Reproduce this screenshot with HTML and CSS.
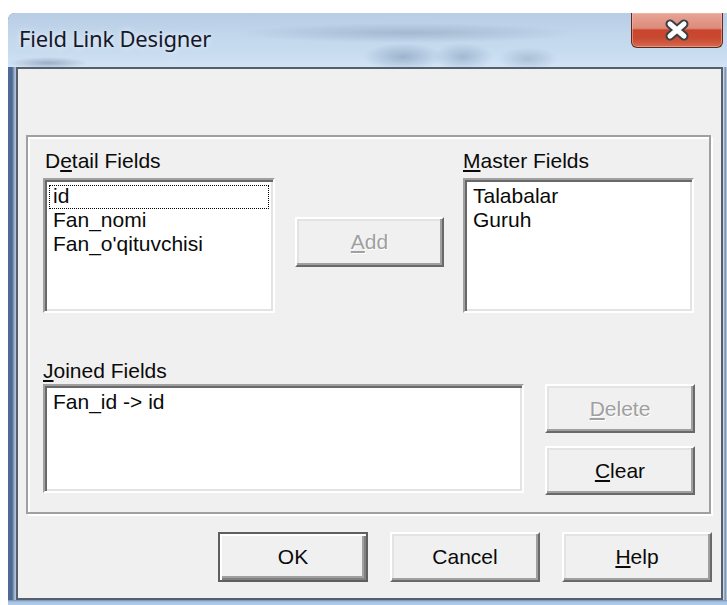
FILE: index.html
```html
<!DOCTYPE html>
<html lang="en">
<head>
<meta charset="utf-8">
<title>Field Link Designer</title>
<link rel="stylesheet" href="styles.css">
</head>
<body>
<div class="window">
  <div class="titlebar">
    <span class="title">Field Link Designer</span>
    <button class="close" aria-label="Close">
      <svg width="28" height="22" viewBox="0 0 28 22">
        <path d="M7 5 L21 17 M21 5 L7 17" stroke="#3b3f46" stroke-width="9" stroke-linecap="round"/>
        <path d="M7 5 L21 17 M21 5 L7 17" stroke="#ffffff" stroke-width="5" stroke-linecap="round"/>
      </svg>
    </button>
  </div>
  <div class="client">
    <div class="group">
      <div class="row-top">
        <div class="field field-detail">
          <span class="label label-indent">D<u>e</u>tail Fields</span>
          <div class="listbox listbox-detail">
            <div class="item focused">id</div>
            <div class="item">Fan_nomi</div>
            <div class="item">Fan_o'qituvchisi</div>
          </div>
        </div>
        <button class="btn btn-add" disabled><u>A</u>dd</button>
        <div class="field field-master">
          <span class="label"><u>M</u>aster Fields</span>
          <div class="listbox listbox-master">
            <div class="item">Talabalar</div>
            <div class="item">Guruh</div>
          </div>
        </div>
      </div>
      <div class="row-bottom">
        <div class="field field-joined">
          <span class="label"><u>J</u>oined Fields</span>
          <div class="listbox listbox-joined">
            <div class="item">Fan_id -&gt; id</div>
          </div>
        </div>
        <div class="side-buttons">
          <button class="btn" disabled><u>D</u>elete</button>
          <button class="btn"><u>C</u>lear</button>
        </div>
      </div>
    </div>
    <div class="footer">
      <button class="btn btn-default">OK</button>
      <button class="btn">Cancel</button>
      <button class="btn"><u>H</u>elp</button>
    </div>
  </div>
</div>
</body>
</html>
```
FILE: styles.css
```css
* { box-sizing: border-box; }

html, body {
  margin: 0;
  padding: 0;
}

body {
  width: 727px;
  height: 605px;
  overflow: hidden;
  background: #ffffff;
  font-family: "Liberation Sans", Arial, sans-serif;
  color: #0a0a0a;
}

/* ---- window frame ---- */
.window {
  margin: 13px 0 0 8px;
  width: 725px;
  height: 595px;
  padding: 0 10px 8px 8px;
  display: flex;
  flex-direction: column;
  border-radius: 7px 7px 0 0;
  background:
    linear-gradient(to bottom, transparent 0, transparent 587px, #6f8fb8 587px, #a9c5e4 589px, #b9d2ec 100%),
    linear-gradient(to right, #506c96 0, #4b6791 4px, #8ea5c2 6px, #b8cbe0 8px, #c3d6ea 716px, #6d7f95 717px, #c6d9ec 719px);
}

.titlebar {
  height: 54px;
  margin: 0 -10px 0 -8px;
  padding: 0 10px 0 8px;
  display: flex;
  justify-content: space-between;
  align-items: flex-start;
  border-radius: 7px 7px 0 0;
  background:
    radial-gradient(ellipse 40px 14px at 395px 44px, rgba(70, 100, 140, 0.35), transparent),
    radial-gradient(ellipse 30px 14px at 455px 44px, rgba(70, 100, 140, 0.3), transparent),
    radial-gradient(ellipse 30px 12px at 520px 46px, rgba(70, 100, 140, 0.25), transparent),
    radial-gradient(ellipse 170px 10px at 400px 20px, rgba(110, 130, 160, 0.35), transparent),
    radial-gradient(ellipse 40px 6px at 40px 50px, rgba(60, 80, 110, 0.35), transparent),
    linear-gradient(to bottom, #b7cde4 0, #c2d7ec 22px, #c8dcf0 40px, #d2e4f5 54px);
}

.title {
  padding: 12px 0 0 3px;
  font-family: "Noto Sans", "Open Sans", sans-serif;
  font-size: 22px;
  line-height: 26px;
  letter-spacing: -0.2px;
  color: #16182a;
  text-shadow: 0 0 6px rgba(255, 255, 255, 0.8);
}

.close {
  width: 92px;
  height: 35px;
  margin: 0;
  padding: 0;
  display: flex;
  align-items: center;
  justify-content: center;
  border: 1px solid #5c2a22;
  border-top: none;
  border-radius: 0 0 6px 6px;
  background: linear-gradient(to bottom, #e7a596 0, #dd8b79 45%, #c9452c 50%, #c84a30 75%, #d56a50 100%);
  box-shadow: inset 0 0 0 1px rgba(255, 200, 190, 0.45);
}

/* ---- client area ---- */
.client {
  flex: 1;
  border: 2px solid #55606c;
  background: #f0f0f0;
  display: flex;
  flex-direction: column;
}

.group {
  margin: 66px 0 0 8px;
  width: 685px;
  height: 379px;
  border: 2px solid #a0a0a0;
  box-shadow: inset 2px 2px 0 #ffffff, 2px 2px 0 #ffffff;
}

.row-top {
  display: flex;
  align-items: flex-start;
  padding: 12px 0 0 15px;
}

.row-bottom {
  display: flex;
  align-items: flex-start;
  padding: 46px 0 0 15px;
}

.field {
  display: flex;
  flex-direction: column;
}

.label {
  display: block;
  height: 24px;
  font-size: 21px;
  line-height: 24px;
  margin-bottom: 5px;
  white-space: nowrap;
}

.label-indent { padding-left: 2px; }

.field-joined .label { margin-bottom: 1px; }

u {
  text-decoration-thickness: 2px;
  text-underline-offset: 2px;
}

/* ---- list boxes ---- */
.listbox {
  background: #ffffff;
  border: 2px solid;
  border-color: #a0a0a0 #ffffff #ffffff #a0a0a0;
  box-shadow: inset 2px 2px 0 #696969, inset -2px -2px 0 #e3e3e3;
  padding: 5px 4px;
}

.listbox-detail { width: 232px; height: 135px; }
.listbox-master { width: 231px; height: 135px; }
.listbox-joined { width: 481px; height: 109px; }

.item {
  height: 24px;
  line-height: 22px;
  font-size: 21px;
  padding-left: 4px;
  white-space: nowrap;
}

.item.focused {
  outline: 1px dotted #000000;
  outline-offset: -1px;
}

/* ---- buttons ---- */
.btn {
  width: 150px;
  height: 50px;
  margin: 0;
  padding: 0;
  font-family: "Liberation Sans", Arial, sans-serif;
  font-size: 21px;
  color: #0a0a0a;
  background: #f0f0f0;
  border: 2px solid;
  border-color: #ffffff #696969 #696969 #ffffff;
  box-shadow: inset -2px -2px 0 #a0a0a0, inset 2px 2px 0 #e3e3e3;
}

.btn:disabled {
  color: #a0a0a0;
  text-shadow: 1px 1px 0 #ffffff;
}

.btn-add {
  width: 149px;
  margin: 68px 0 0 20px;
}

.field-master { margin-left: 19px; }

.side-buttons {
  display: flex;
  flex-direction: column;
  gap: 13px;
  margin: 25px 0 0 21px;
}

.side-buttons .btn { height: 49px; }

.btn-default {
  border: 2px solid #5f5f5f;
  box-shadow: inset 2px 2px 0 #ffffff, inset -2px -2px 0 #808080, inset -4px -4px 0 #a0a0a0;
}

.footer {
  display: flex;
  justify-content: flex-end;
  gap: 22px;
  margin-top: 18px;
  padding-right: 9px;
}
```
